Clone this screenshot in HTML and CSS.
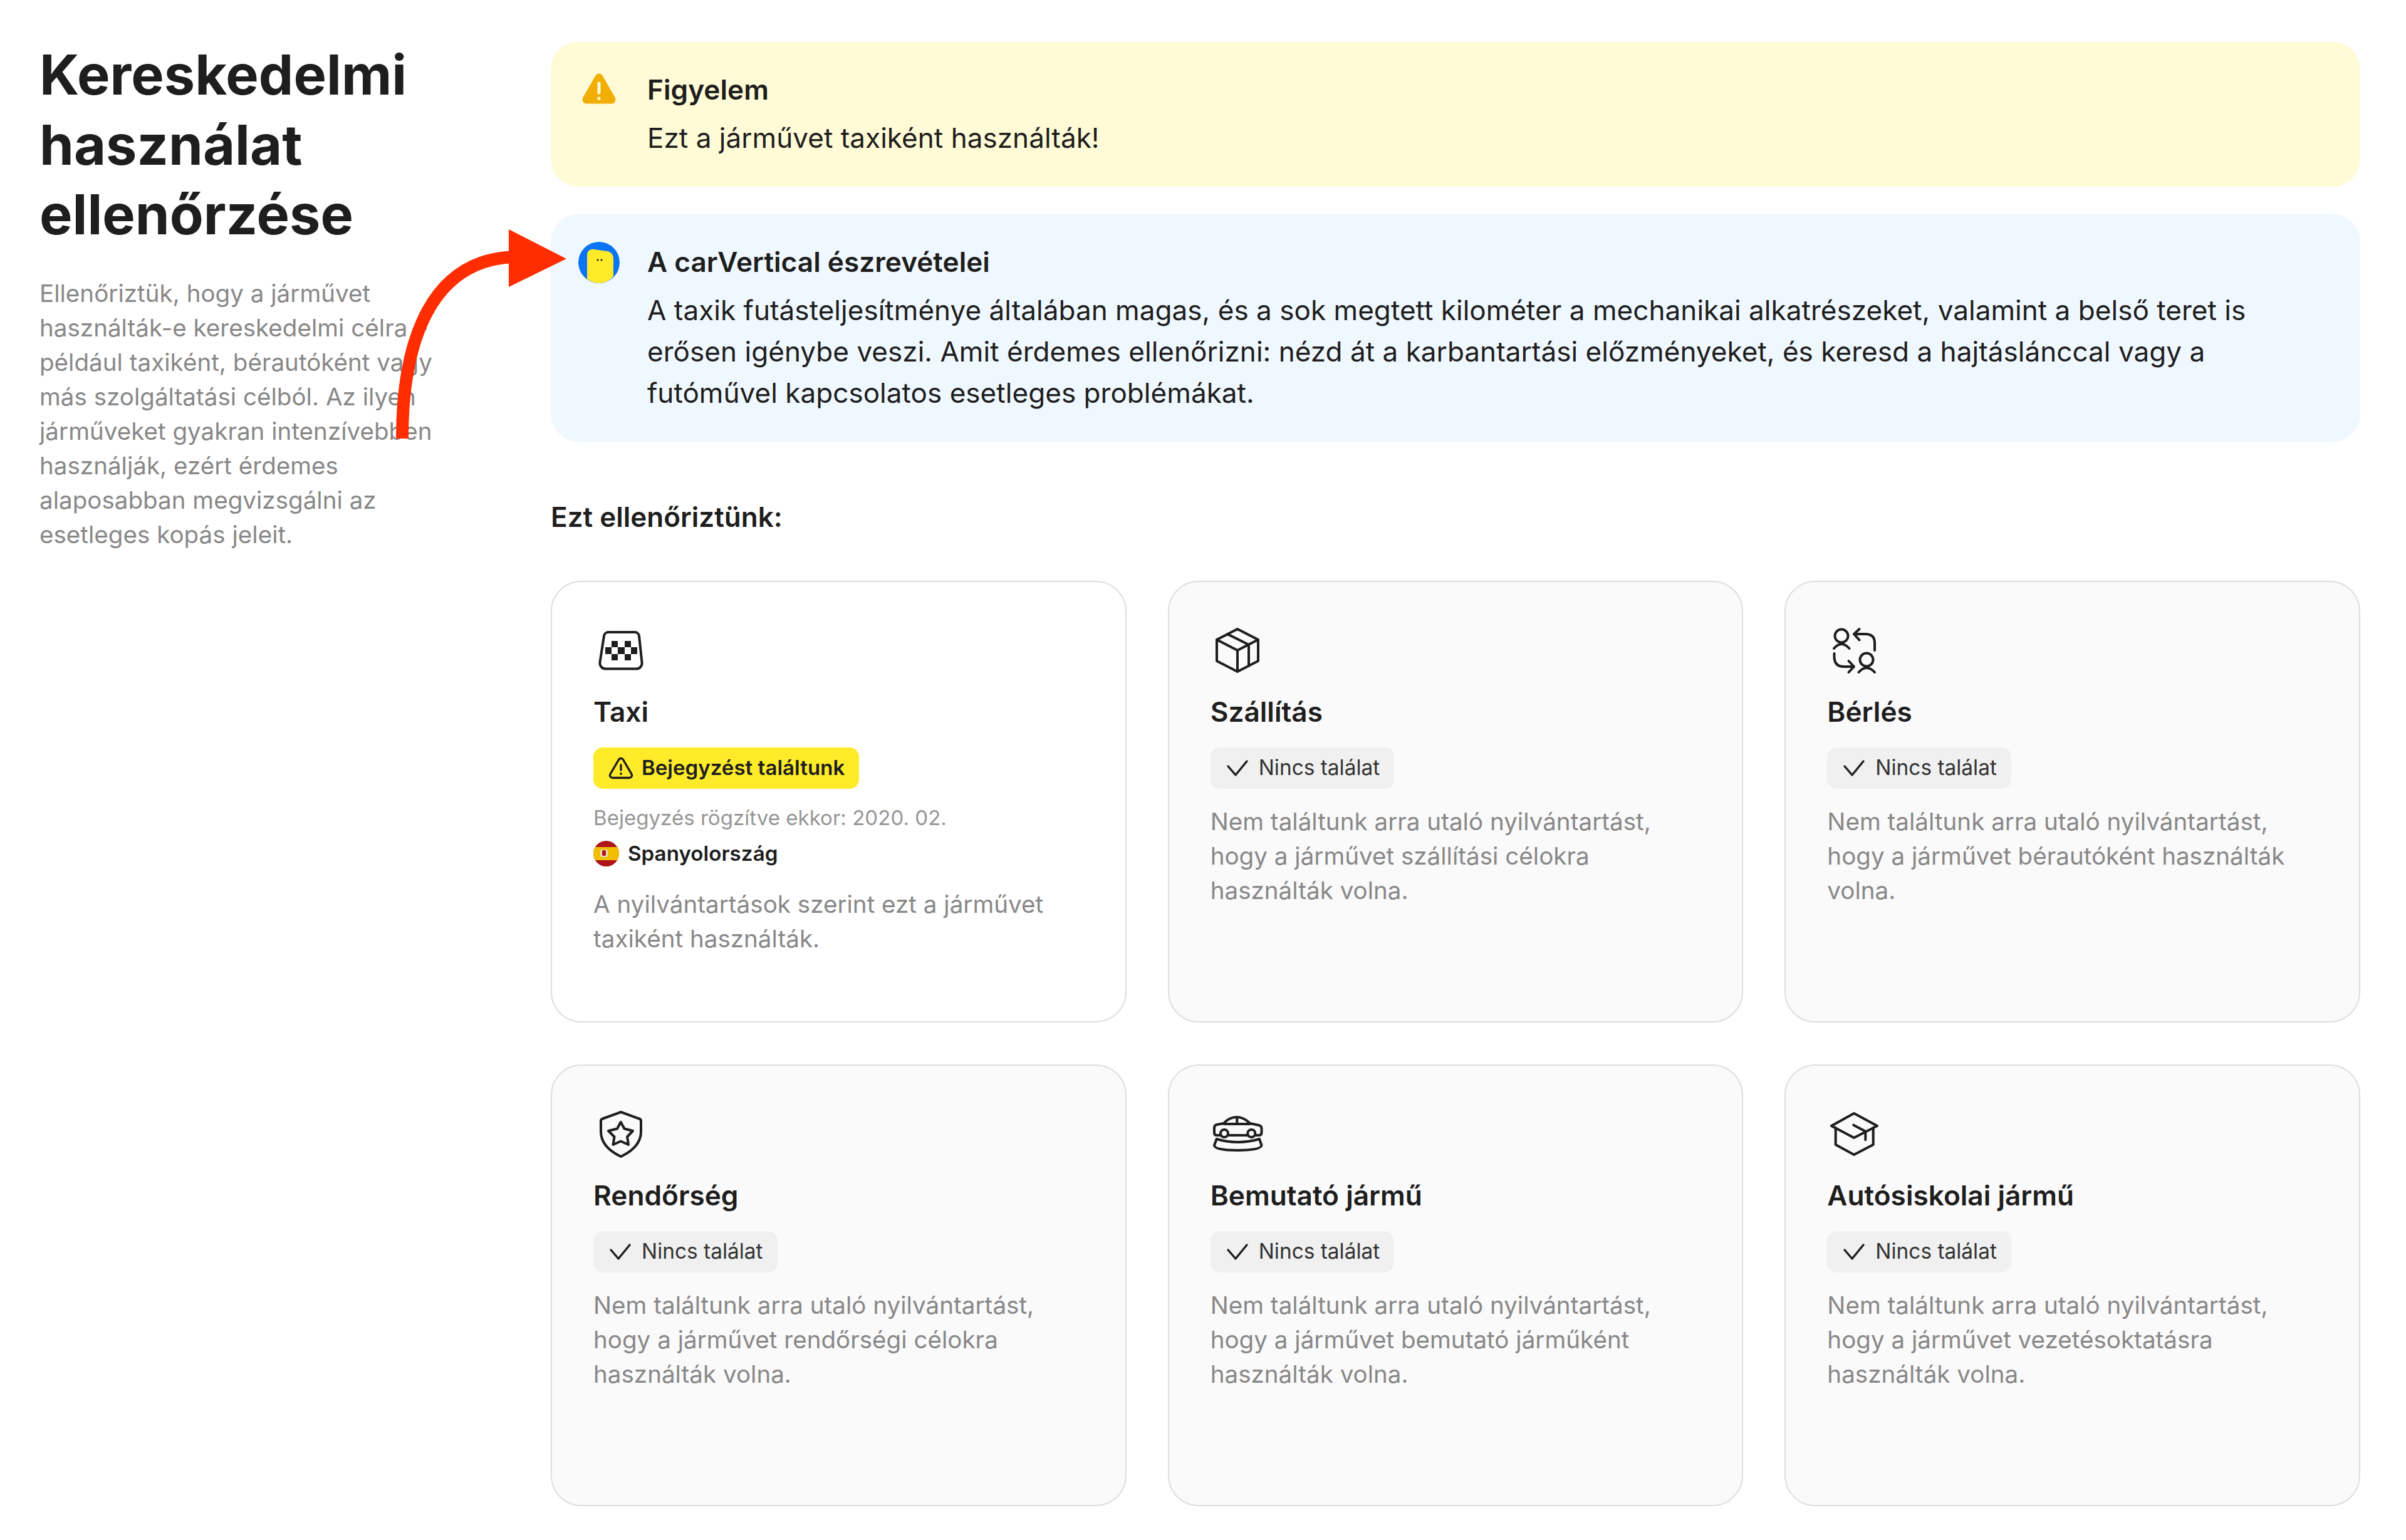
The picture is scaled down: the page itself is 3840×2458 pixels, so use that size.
FILE: index.html
```html
<!DOCTYPE html>
<html lang="hu">
<head>
<meta charset="utf-8">
<title>Kereskedelmi használat ellenőrzése</title>
<link rel="stylesheet" href="styles.css">
</head>
<body>
<div class="page">
  <aside class="intro">
    <h1>Kereskedelmi használat ellenőrzése</h1>
    <p>Ellenőriztük, hogy a járművet használták-e kereskedelmi célra – például taxiként, bérautóként vagy más szolgáltatási célból. Az ilyen járműveket gyakran intenzívebben használják, ezért érdemes alaposabban megvizsgálni az esetleges kopás jeleit.</p>
  </aside>
  <main class="main">
    <section class="notice notice-warn">
      <svg class="notice-icon" viewBox="0 0 66 66"><path class="warn-fill" d="M33 13 L53 48 H13 Z"/><path class="warn-mark" d="M33 22 V37"/><circle class="warn-dot" cx="33" cy="46" r="2.6"/></svg>
      <div class="notice-body">
        <h2>Figyelem</h2>
        <p>Ezt a járművet taxiként használták!</p>
      </div>
    </section>
    <section class="notice notice-info">
      <svg class="notice-icon" viewBox="0 0 66 66"><circle class="av-bg" cx="33" cy="33" r="33"/><path class="av-body" d="M14 22 C14 15 18 11 25 12 L46 15 C52 16 56 20 56 27 V55 C50 62 42 66 33 66 C26 66 19 63 14 59 Z"/><circle class="av-eye" cx="31" cy="29" r="1.6"/><circle class="av-eye" cx="37" cy="29" r="1.6"/></svg>
      <div class="notice-body">
        <h2>A carVertical észrevételei</h2>
        <p>A taxik futásteljesítménye általában magas, és a sok megtett kilométer a mechanikai alkatrészeket, valamint a belső teret is erősen igénybe veszi. Amit érdemes ellenőrizni: nézd át a karbantartási előzményeket, és keresd a hajtáslánccal vagy a futóművel kapcsolatos esetleges problémákat.</p>
      </div>
    </section>
    <h3 class="section-title">Ezt ellenőriztünk:</h3>
    <div class="grid">
      <article class="card card-hit">
        <svg class="card-icon" viewBox="0 0 84 84"><path class="ln" d="M23 13 H65 a7 7 0 0 1 7 6 L76.500 61 a9 9 0 0 1 -9 10.500 H18.500 a9 9 0 0 1 -9 -10.500 L16 19 a7 7 0 0 1 7 -6 Z"/><path class="fl" d="M28 27h10v10H28zM49 27h10v10H49zM18 37h10v11H18zM38 37h11v11H38zM59 37h10v11H59zM28 48h10v10H28zM49 48h10v10H49z"/></svg>
        <h4>Taxi</h4>
        <span class="badge badge-hit"><svg class="badge-icon" viewBox="0 0 44 44"><path class="ln-s" d="M18.500 8.500 a4 4 0 0 1 7 0 L39 31.500 a4 4 0 0 1 -3.500 6 H8.500 a4 4 0 0 1 -3.500 -6 Z"/><path class="ln-s" d="M22 17 V25"/><circle class="fl" cx="22" cy="31" r="1.9"/></svg>Bejegyzést találtunk</span>
        <p class="record-date">Bejegyzés rögzítve ekkor: 2020. 02.</p>
        <p class="record-country"><svg class="flag" viewBox="0 0 41 41"><clipPath id="flagclip"><circle cx="20.500" cy="20.500" r="20.500"/></clipPath><g clip-path="url(#flagclip)"><rect class="flag-red" width="41" height="41"/><rect class="flag-yellow" y="10" width="41" height="21"/><rect class="flag-white" x="11" y="14" width="12" height="12" rx="3"/><rect class="flag-red" x="14" y="15" width="6" height="9" rx="2"/></g></svg>Spanyolország</p>
        <p class="desc desc-hit">A nyilvántartások szerint ezt a járművet taxiként használták.</p>
      </article>
      <article class="card">
        <svg class="card-icon" viewBox="0 0 84 84"><path class="ln" d="M42 8 L75 25 V59 L42 76 L9 59 V25 Z M9 25 L42 42 L75 25 M42 42 V76 M26 16 L60 33 V67"/></svg>
        <h4>Szállítás</h4>
        <span class="badge"><svg class="badge-icon" viewBox="0 0 44 44"><path class="ln-s" d="M6 19 L18 33 L36 11"/></svg>Nincs találat</span>
        <p class="desc">Nem találtunk arra utaló nyilvántartást, hogy a járművet szállítási célokra használták volna.</p>
      </article>
      <article class="card">
        <svg class="card-icon" viewBox="0 0 84 84"><circle class="ln" cx="22" cy="19" r="10.500"/><path class="ln" d="M10 39 Q22 25 34.500 39"/><path class="ln" d="M75 42 V30 Q75 16 60 16 H42 M50.500 8 L42 16 L50.500 25.500"/><circle class="ln" cx="62" cy="57" r="10.500"/><path class="ln" d="M49.500 77 Q62 63 75 77"/><path class="ln" d="M10.500 47 V52 Q10.500 68 26 68 H42 M33.500 59 L42 68 L33.500 77"/></svg>
        <h4>Bérlés</h4>
        <span class="badge"><svg class="badge-icon" viewBox="0 0 44 44"><path class="ln-s" d="M6 19 L18 33 L36 11"/></svg>Nincs találat</span>
        <p class="desc">Nem találtunk arra utaló nyilvántartást, hogy a járművet bérautóként használták volna.</p>
      </article>
      <article class="card">
        <svg class="card-icon" viewBox="0 0 84 84"><path class="ln" d="M43 7 L72 17.500 a4 4 0 0 1 3 4 V38 C75 58 60 70 43 78 C26 70 11 58 11 38 V21.500 a4 4 0 0 1 3 -4 Z"/><path class="ln" d="M42.700 23 L48.500 33.500 L62 37 L53 46.500 L55 59 L42.700 53.500 L30.500 59 L32.500 46.500 L23 37 L37 33.500 Z"/></svg>
        <h4>Rendőrség</h4>
        <span class="badge"><svg class="badge-icon" viewBox="0 0 44 44"><path class="ln-s" d="M6 19 L18 33 L36 11"/></svg>Nincs találat</span>
        <p class="desc">Nem találtunk arra utaló nyilvántartást, hogy a járművet rendőrségi célokra használták volna.</p>
      </article>
      <article class="card">
        <svg class="card-icon" viewBox="0 0 84 84"><path class="ln" d="M15 44 H9 Q5 44 5 40 V32 Q5 28 9 27 L20 25 Q29 15 41 15 Q52 15 62 25 L76 28 Q80.500 29 80.500 33 V40 Q80.500 44 76 44 H71 M27 44 H58"/><path class="ln" d="M20 26 H62 M41.300 16 V26"/><circle class="ln" cx="21" cy="41" r="6"/><circle class="ln" cx="64.300" cy="41" r="6"/><path class="ln" d="M8.700 50 Q42 60 77 50 L80.500 60 Q80 68 42 68 Q5 68 5 60 Z"/></svg>
        <h4>Bemutató jármű</h4>
        <span class="badge"><svg class="badge-icon" viewBox="0 0 44 44"><path class="ln-s" d="M6 19 L18 33 L36 11"/></svg>Nincs találat</span>
        <p class="desc">Nem találtunk arra utaló nyilvántartást, hogy a járművet bemutató járműként használták volna.</p>
      </article>
      <article class="card">
        <svg class="card-icon" viewBox="0 0 84 84"><path class="ln" d="M42 9 L79 29 L42 48 L6 29 Z"/><path class="ln" d="M12.700 32 V59 L42 75 L72.700 59 V32"/><path class="ln" d="M41.300 27.700 L60.300 37.700 V51.300"/></svg>
        <h4>Autósiskolai jármű</h4>
        <span class="badge"><svg class="badge-icon" viewBox="0 0 44 44"><path class="ln-s" d="M6 19 L18 33 L36 11"/></svg>Nincs találat</span>
        <p class="desc">Nem találtunk arra utaló nyilvántartást, hogy a járművet vezetésoktatásra használták volna.</p>
      </article>
    </div>
  </main>
  <svg class="arrow" viewBox="0 0 300 360"><path class="arrow-line" d="M22 350 C22 190 70 65 200 60"/><path class="arrow-head" d="M192 16 L284 63 L192 108 Z"/></svg>
</div>
</body>
</html>
```
FILE: styles.css
```css
* { box-sizing: border-box; }
html, body { margin: 0; padding: 0; background: #fff; }
body { font-family: "Inter", "Liberation Sans", sans-serif; color: #1e1e1e; }
h1, h2, h3, h4, p { margin: 0; }

.page {
  position: relative;
  display: grid;
  grid-template-columns: 640px 1fr;
  column-gap: 176px;
  padding: 67px 73px 55px 63px;
  width: 3840px;
}

.intro h1 { font-size: 88.2px; line-height: 111.5px; font-weight: 700; margin-top: -3px; }
.intro p { font-size: 38.6px; line-height: 55px; color: #888; margin-top: 42px; }

.main { display: flex; flex-direction: column; min-width: 0; }

.notice { display: flex; gap: 44px; padding: 44px 44px 45px; border-radius: 44px; }
.notice + .notice { margin-top: 44px; }
.notice-warn { background: #fffbd6; }
.notice-info { background: #f0f8ff; }
.notice-icon { width: 66px; height: 66px; flex: none; }
.notice-body h2 { font-size: 44.2px; line-height: 65px; font-weight: 600; }
.notice-body p { font-size: 44.1px; line-height: 66px; margin-top: 11px; }

.warn-fill { fill: #f2ae05; stroke: #f2ae05; stroke-width: 13; stroke-linejoin: round; }
.warn-mark { stroke: #fffbd6; stroke-width: 5; stroke-linecap: round; fill: none; }
.warn-dot { fill: #fffbd6; }
.av-bg { fill: #0b74f4; }
.av-body { fill: #ffeb29; }
.av-eye { fill: #1e1e1e; }

.section-title { font-size: 44px; line-height: 66px; font-weight: 600; margin-top: 87px; }

.grid {
  display: grid;
  grid-template-columns: repeat(3, 1fr);
  grid-auto-rows: 705px;
  column-gap: 66px;
  row-gap: 67px;
  margin-top: 69px;
}

.card {
  display: flex;
  flex-direction: column;
  align-items: flex-start;
  padding: 67px 66px;
  background: #fafafa;
  border: 2px solid #dedede;
  border-radius: 49px;
}
.card-hit { background: #fff; }
.card-icon { width: 84px; height: 84px; display: block; margin-left: 1px; }
.card h4 { font-size: 44.2px; line-height: 66px; font-weight: 600; margin-top: 23px; }

.badge {
  display: inline-flex;
  align-items: center;
  gap: 11px;
  height: 66px;
  margin-top: 24px;
  padding: 0 23px 2px 22px;
  border-radius: 15px;
  background: #f0f0f0;
  font-size: 33.4px;
  color: #333;
}
.badge-hit { background: #ffeb29; color: #1e1e1e; font-weight: 600; font-size: 33.1px; }
.badge-icon { width: 44px; height: 44px; flex: none; margin-top: 2px; }

.ln { fill: none; stroke: #1e1e1e; stroke-width: 4; stroke-linejoin: round; stroke-linecap: round; }
.ln-s { fill: none; stroke: #1e1e1e; stroke-width: 3.4; stroke-linejoin: round; stroke-linecap: round; }
.fl { fill: #1e1e1e; }

.record-date { font-size: 33.1px; line-height: 48px; color: #969696; margin-top: 22px; }
.record-country {
  display: flex;
  align-items: center;
  gap: 14px;
  font-size: 33.2px;
  line-height: 48px;
  font-weight: 600;
  margin-top: 9px;
}
.flag { width: 41px; height: 41px; flex: none; }
.flag-red { fill: #ad1519; }
.flag-yellow { fill: #f1bf00; }
.flag-white { fill: #e9dcc0; }

.desc { font-size: 38.6px; line-height: 55px; color: #888; margin-top: 25px; }
.desc-hit { margin-top: 30px; }

.arrow { position: absolute; left: 620px; top: 350px; width: 300px; height: 360px; pointer-events: none; }
.arrow-line { fill: none; stroke: #ff2d00; stroke-width: 20; }
.arrow-head { fill: #ff2d00; }
```
